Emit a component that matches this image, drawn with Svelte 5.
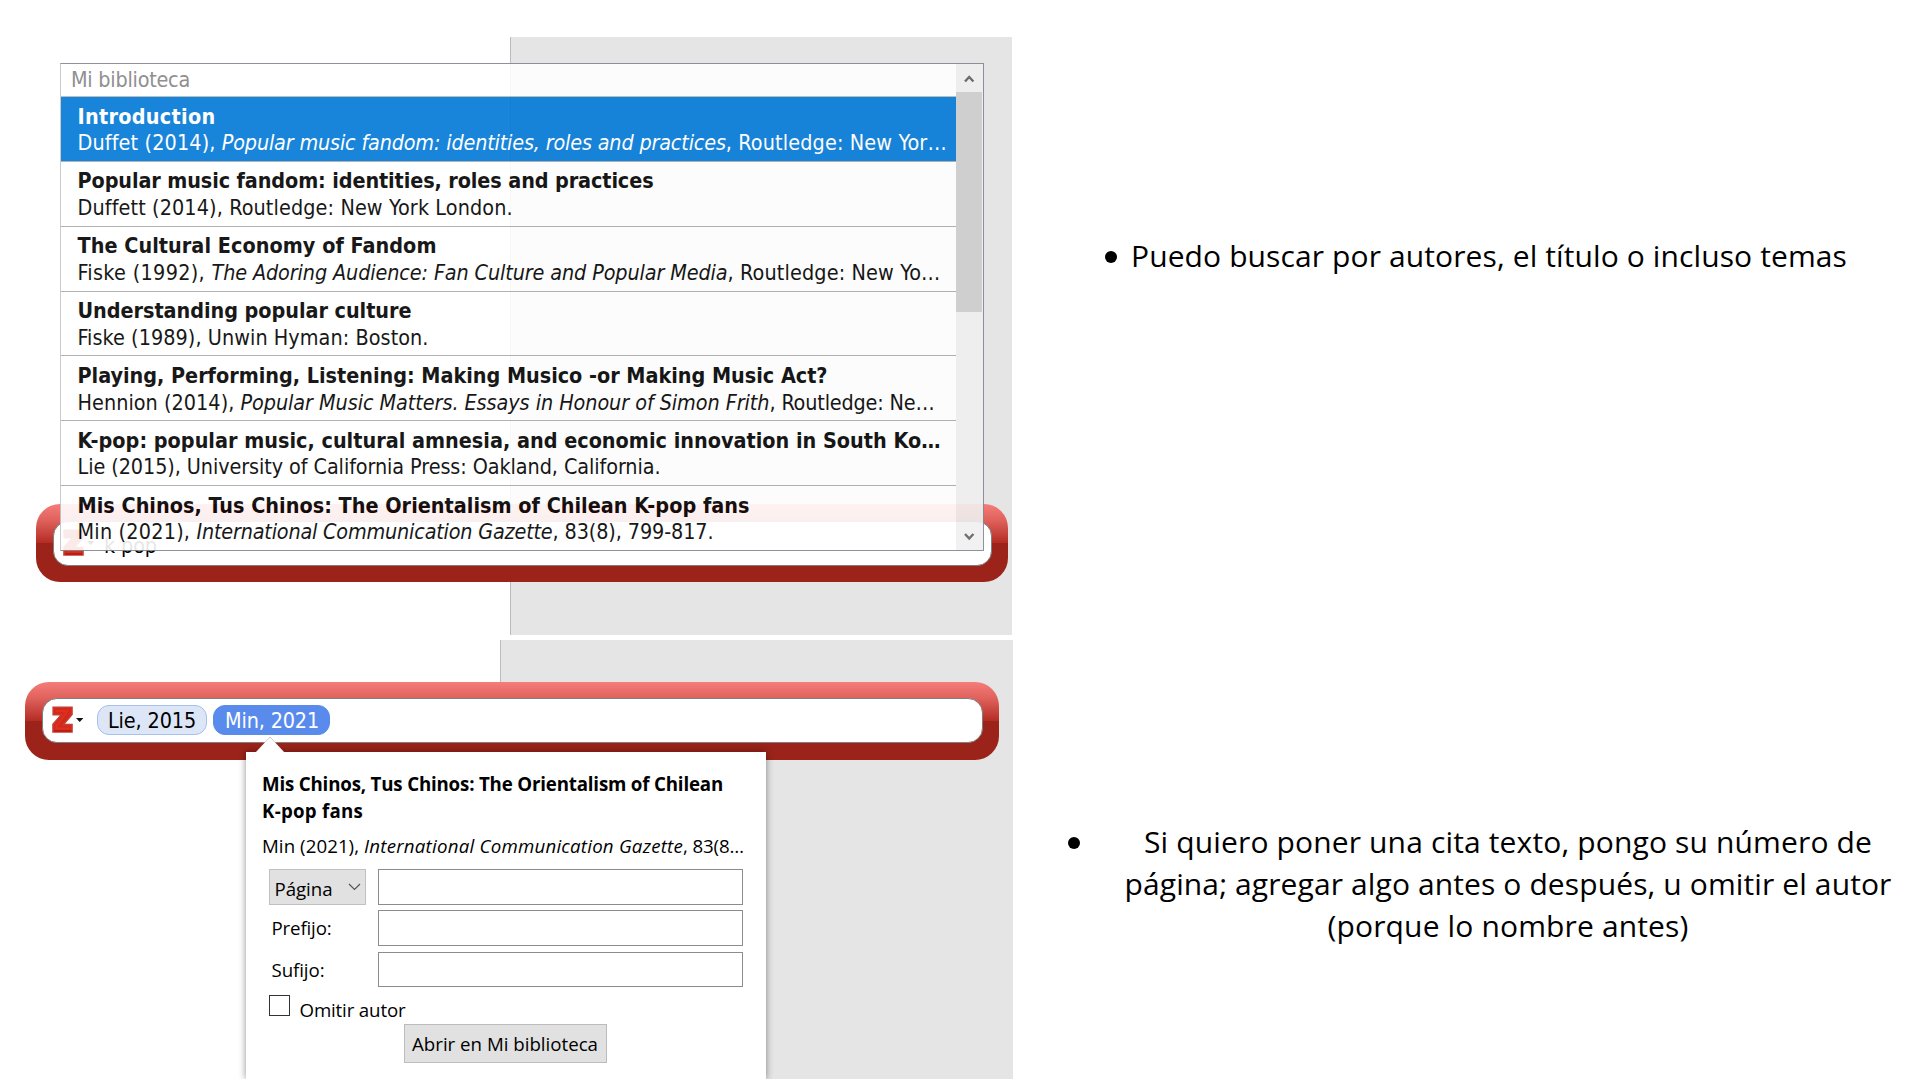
<script>
  const results = [
    { title: 'Introduction', tw: 138, active: true, parts: [
      { t: 'Duffet (2014), ', w: 144 },
      { t: 'Popular music fandom: identities, roles and practices', w: 504, i: true },
      { t: ', Routledge: New Yor…', w: 221 }] },
    { title: 'Popular music fandom: identities, roles and practices', tw: 576, parts: [
      { t: 'Duffett (2014), Routledge: New York London.', w: 435 }] },
    { title: 'The Cultural Economy of Fandom', tw: 359, parts: [
      { t: 'Fiske (1992), ', w: 134 },
      { t: 'The Adoring Audience: Fan Culture and Popular Media', w: 516, i: true },
      { t: ', Routledge: New Yo…', w: 213 }] },
    { title: 'Understanding popular culture', tw: 334, parts: [
      { t: 'Fiske (1989), Unwin Hyman: Boston.', w: 351 }] },
    { title: 'Playing, Performing, Listening: Making Musico -or Making Music Act?', tw: 750, parts: [
      { t: 'Hennion (2014), ', w: 163 },
      { t: 'Popular Music Matters. Essays in Honour of Simon Frith', w: 529, i: true },
      { t: ', Routledge: Ne…', w: 165 }] },
    { title: 'K-pop: popular music, cultural amnesia, and economic innovation in South Ko…', tw: 863, parts: [
      { t: 'Lie (2015), University of California Press: Oakland, California.', w: 583 }] },
    { title: 'Mis Chinos, Tus Chinos: The Orientalism of Chilean K-pop fans', tw: 672, parts: [
      { t: 'Min (2021), ', w: 119 },
      { t: 'International Communication Gazette', w: 356, i: true },
      { t: ', 83(8), 799-817.', w: 161 }] },
  ];

  // Tracks the text so that it takes the given width.
  function fit(node, width) {
    const natural = node.getBoundingClientRect().width;
    node.style.letterSpacing = `${(width - natural) / node.textContent.length}px`;
  }
</script>

{#snippet zotero()}
  <svg class="z" width="33" height="28" viewBox="0 0 33 28">
    <path d="M1.2 1.2H20V8.4L11.4 18.6H20V26H1V18.4L9.4 8.8H1.2Z" fill="#d4281c" stroke="#c63c32" stroke-width="1.6" />
    <path d="M3.4 5H15.6L4.6 19.6V22.4H18" fill="none" stroke="#e0301c" stroke-width="2" />
    <path d="M2 25H19.4" stroke="#a81c14" stroke-width="1.4" />
    <path d="M24 12H31.4L27.7 16Z" fill="#111" />
  </svg>
{/snippet}

<main>
  <div class="shots">
    <section class="shot first">
      <div class="bar">
        <div class="field">{@render zotero()}<span class="typed"><span use:fit={53}>k pop</span></span></div>
      </div>
      <div class="menu">
        <div class="list">
          <div class="head"><span use:fit={119}>Mi biblioteca</span></div>
          {#each results as r}
            <div class="row" class:active={r.active}>
              <div class="title"><span use:fit={r.tw}>{r.title}</span></div>
              <div class="sub">{#each r.parts as p}<span class:it={p.i} use:fit={p.w}>{p.t}</span>{/each}</div>
            </div>
          {/each}
        </div>
        <div class="scroll">
          <svg width="26" height="28" viewBox="0 0 26 28"><path d="M9 17.5L13.2 13L17.4 17.5" /></svg>
          <div class="thumb"></div>
          <svg width="26" height="28" viewBox="0 0 26 28"><path d="M9 12L13.2 16.5L17.4 12" /></svg>
        </div>
      </div>
    </section>

    <section class="shot second">
      <div class="bar">
        <div class="field">
          {@render zotero()}
          <div class="pill lie"><span use:fit={88}>Lie, 2015</span></div>
          <div class="pill min"><span use:fit={94}>Min, 2021</span></div>
        </div>
      </div>
      <div class="pop">
        <svg class="tip" width="30" height="17" viewBox="0 0 30 17"><path d="M0 17L15 1L30 17Z" fill="#fff" /><path d="M10.5 5.8L15 1L19.5 5.8" fill="none" stroke="#ccc" /></svg>
        <div class="ptitle"><span use:fit={461}>Mis Chinos, Tus Chinos: The Orientalism of Chilean</span></div>
        <div class="ptitle"><span use:fit={101}>K-pop fans</span></div>
        <div class="psub"><span use:fit={102}>{'Min (2021), '}</span><span class="it" use:fit={319}>International Communication Gazette</span><span use:fit={61}>, 83(8…</span></div>
        <div class="form">
          <div class="select"><span use:fit={58}>Página</span>
            <svg width="13" height="8" viewBox="0 0 13 8"><path d="M1 1L6.5 6.5L12 1" fill="none" stroke="#555" stroke-width="1.2" /></svg>
          </div>
          <div class="input"></div>
          <div class="label"><span use:fit={60}>Prefijo:</span></div>
          <div class="input"></div>
          <div class="label"><span use:fit={53}>Sufijo:</span></div>
          <div class="input"></div>
        </div>
        <div class="omit"><i class="check"></i><span use:fit={106}>Omitir autor</span></div>
        <div class="button"><span use:fit={186}>Abrir en Mi biblioteca</span></div>
      </div>
    </section>
  </div>

  <div class="notes">
    <div class="note one"><i class="dot"></i><p><span use:fit={716}>Puedo buscar por autores, el título o incluso temas</span></p></div>
    <div class="note two">
      <i class="dot"></i>
      <p>
        <span use:fit={728}>Si quiero poner una cita texto, pongo su número de</span><br />
        <span use:fit={767}>página; agregar algo antes o después, u omitir el autor</span><br />
        <span use:fit={361}>(porque lo nombre antes)</span>
      </p>
    </div>
  </div>
</main>

<style>
  :global(body) { background: #fff; overflow: hidden; }
  * { box-sizing: border-box; }
  main { display: grid; grid-template-columns: 1020px 900px; height: 1080px; background: #fff; overflow: hidden; color: #000; }
  span { white-space: pre; }
  .shots { display: flex; flex-direction: column; padding-top: 37px; gap: 5px; }
  .shot { position: relative; }
  .first {
    height: 598px; padding: 467px 0 0 36px; font: 21.4px/26px 'DejaVu Sans Condensed', 'DejaVu Sans', sans-serif; font-stretch: condensed;
    background: linear-gradient(90deg, transparent 510px, #bbb 510px 511px, #e5e5e5 511px 1012px, transparent 1012px);
  }
  .second {
    height: 439px; padding: 41.5px 0 0 25px; font: 18.7px/27px 'Open Sans', 'Noto Sans', sans-serif;
    background: linear-gradient(90deg, transparent 500px, #bbb 500px 501px, #e5e5e5 501px 1013px, transparent 1013px);
  }
  .bar {
    width: 972px; height: 78px; padding: 17px 16px 16px 17px; border-radius: 24px;
    background: linear-gradient(#f57d7a 0, #de605a 22%, #b42c24 50%, #9b231a 50%, #9b231a);
  }
  .second .bar { width: 974px; padding-top: 16px; }
  .field {
    display: flex; align-items: center; height: 45px; border: 1.5px solid #7d8080; border-radius: 15px; background: #fff; padding-left: 9px;
    font: 21.4px/26px 'DejaVu Sans Condensed', 'DejaVu Sans', sans-serif; font-stretch: condensed;
  }
  .typed { margin-left: 8px; padding-top: 4px; }
  .z { flex: none; margin-top: -1px; }
  .menu {
    position: absolute; left: 60px; top: 26px; width: 924px; height: 488px; display: flex; opacity: 0.9;
    background: #fff; border: 1px solid #828790; border-left: 1.5px solid #c4c4cc;
  }
  .list { width: 895px; overflow: hidden; }
  .head { height: 33px; padding: 2.5px 0 0 10px; border-bottom: 1.5px solid #b9b9b5; color: #848484; }
  .row { height: 64.86px; padding: 6.5px 0 0 16.5px; border-bottom: 1.5px solid #aaa; line-height: 26.7px; }
  .row:last-child { border-bottom: 0; }
  .active { background: #0078d7; color: #fff; }
  .title { font-weight: 700; height: 26.7px; }
  .sub { height: 26.7px; white-space: nowrap; }
  .it { font-style: italic; }
  .scroll { display: flex; flex-direction: column; width: 27px; background: #f0f0f0; }
  .scroll path { fill: none; stroke: #606060; stroke-width: 2.4; }
  .scroll svg:last-child { margin-top: auto; }
  .thumb { width: 26px; height: 220px; background: #cdcdcd; }
  .pill { height: 30px; border-radius: 12px; border: 1px solid #a7c0ee; background: #dce6f7; padding: 1.5px 0 0 10px; }
  .lie { width: 110px; margin-left: 12px; }
  .min { width: 117px; margin-left: 6px; padding-left: 11px; color: #fff; background: #598bec; border-color: #598bec; }
  .pop {
    position: absolute; left: 246px; top: 112px; width: 520px; height: 327px; padding: 17.5px 22px 0 16px; background: #fff;
    box-shadow: 0 0 7px rgba(0, 0, 0, 0.45); clip-path: inset(-20px -12px 0 -12px);
  }
  .tip { position: absolute; left: 9px; top: -16px; }
  .ptitle { font-weight: 700; height: 27px; }
  .psub { margin-top: 8px; height: 27px; white-space: nowrap; }
  .form { display: grid; grid-template-columns: 97px 365px; grid-template-rows: repeat(3, 35.5px); gap: 5.8px 12.5px; margin: 10.5px 0 0 6.5px; }
  .select { display: flex; justify-content: space-between; padding: 4.5px 4px 0 5px; border: 1px solid #c0c0c0; background: #e1e1e1; }
  .select svg { margin-top: 8.5px; }
  .label { padding: 4px 0 0 3px; }
  .input { border: 1px solid #8c8c8c; background: #fff; }
  .omit { display: flex; gap: 10px; margin: 8px 0 0 6.5px; height: 29px; padding-top: 1.5px; }
  .check { width: 21px; height: 21px; border: 1.5px solid #333; margin-top: -1.5px; }
  .omit span { margin-top: -0.5px; }
  .button { width: 203px; height: 38.5px; margin-left: 142px; padding: 5px 0 0 7px; border: 1px solid #bcbcbc; background: #e1e1e1; }
  .notes { display: flex; flex-direction: column; font: 30px/42px 'Open Sans', sans-serif; padding-top: 235px; }
  p { margin: 0; text-align: center; }
  .note { display: flex; }
  .dot { flex: none; width: 12px; height: 12px; border-radius: 50%; background: #000; margin-top: 16px; }
  .one { padding-left: 85px; gap: 14px; height: 586px; }
  .two { padding-left: 48px; }
  .two p { flex: 1; margin-right: 26px; padding-left: 42px; }
</style>
